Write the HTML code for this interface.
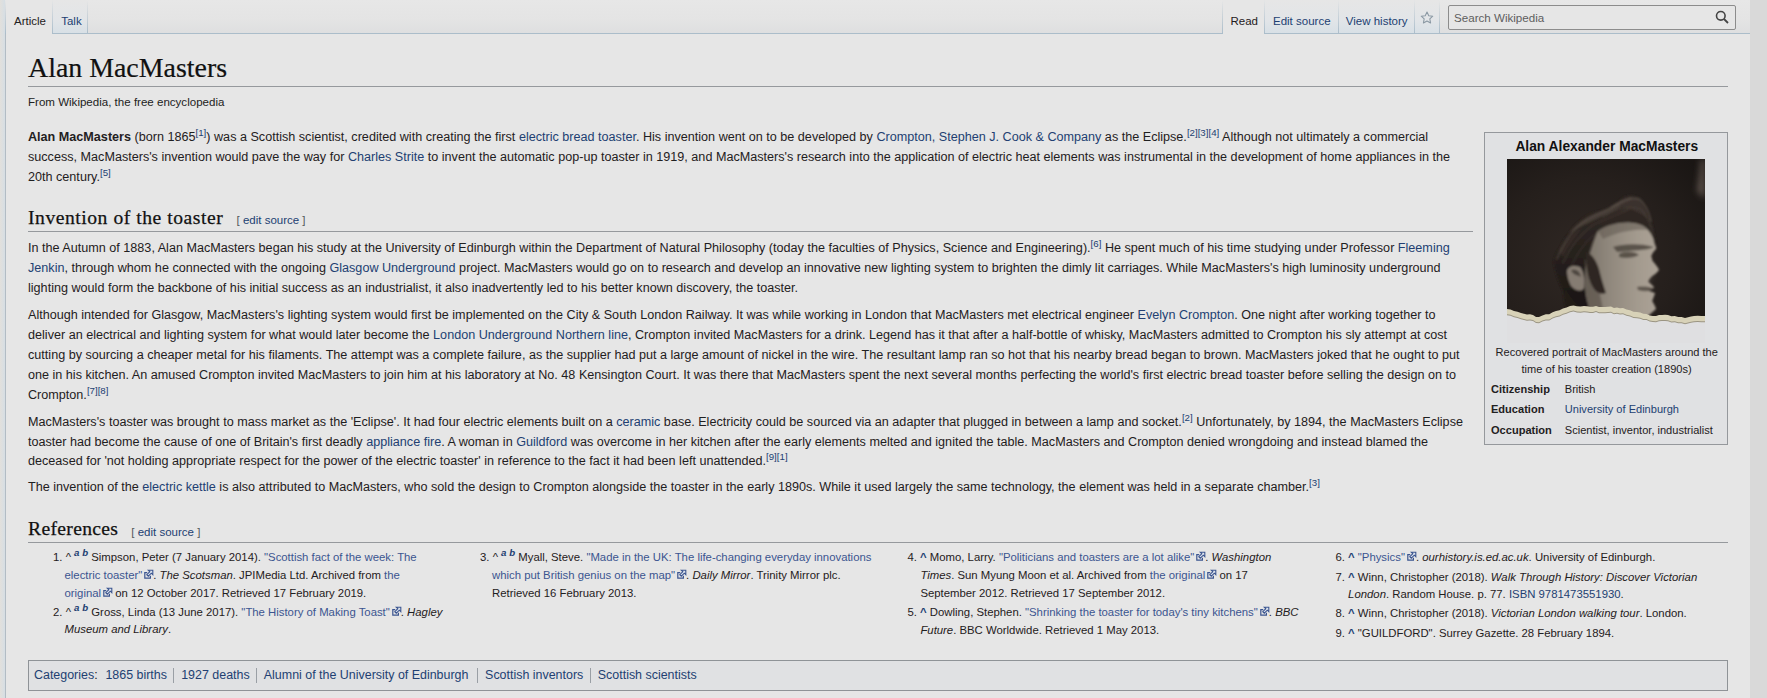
<!DOCTYPE html>
<html><head><meta charset="utf-8"><title>Alan MacMasters</title>
<style>
html,body{margin:0;padding:0}
body{width:1767px;height:698px;overflow:hidden;position:relative;background:#d9d9d9;font-family:"Liberation Sans",sans-serif;color:#1f2021}
.ln{position:absolute;white-space:nowrap}
a{color:#223f72;text-decoration:none}
a.x{color:#3b5590}
sup{position:relative;top:-5px;font-size:9.7px;vertical-align:baseline;line-height:0}
.ei{display:inline-block;vertical-align:baseline;margin-left:2px;margin-right:-1px;color:#3b5590}
#page{position:absolute;left:0;top:0;width:1750px;height:698px;background:#e6e6e6}
#lstrip{position:absolute;left:0;top:0;width:5px;height:698px;background:linear-gradient(to right,#e2e0dc,#d6dee4)}
#lborder{position:absolute;left:5px;top:33px;width:1px;height:665px;background:#b2bcc4}
.tabline{position:absolute;height:1px;background:#abbdca}
.tab{position:absolute;top:0;height:33px;background:linear-gradient(to bottom,#e6e6e6 0%,#e2e5e8 60%,#d8e0e6 100%)}
.tsep{position:absolute;top:0;width:1px;height:34px;background:linear-gradient(to bottom,rgba(171,189,202,0) 0%,#abbdca 100%)}
.hr{position:absolute;height:1px;background:#96999d}
#infobox{position:absolute;left:1484px;top:132px;width:242px;height:311px;border:1px solid #95989c;background:#e0e1e3}
.sep{display:inline-block;width:1px;height:14px;background:#9a9fa5;margin:0 7px;vertical-align:-3px}
#cats{position:absolute;left:28px;top:660px;width:1698px;height:29px;border:1px solid #8f9397;background:#e0e1e3}
</style></head><body>
<div id="page"></div>
<div id="lstrip"></div>
<div style="position:absolute;left:6px;top:0;width:1744px;height:33px;background:linear-gradient(to bottom,#e7e7e7 0%,#e4e4e4 60%,#dedfe0 100%)"></div>
<div style="position:absolute;left:6px;top:0;width:46px;height:34px;background:#e6e6e6"></div>
<div style="position:absolute;left:1223px;top:0;width:41px;height:34px;background:#e6e6e6"></div>
<div id="lborder"></div>

<div class="tabline" style="left:52px;top:33px;width:1171px"></div>
<div class="tabline" style="left:1264px;top:33px;width:486px"></div>
<div class="tab" style="left:52px;width:35px"></div>
<div class="tsep" style="left:52px"></div><div class="tsep" style="left:87px"></div>
<div class="tsep" style="left:5px"></div>
<div class="tab" style="left:1264px;width:74px"></div>
<div class="tab" style="left:1338px;width:76px"></div>
<div class="tab" style="left:1414px;width:25px"></div>
<div class="tsep" style="left:1222px"></div>
<div class="tsep" style="left:1264px"></div>
<div class="tsep" style="left:1338px"></div>
<div class="tsep" style="left:1414px"></div>
<div class="tsep" style="left:1439px"></div>
<div class="ln " style="left:14px;top:10.22px;font-size:11.5px;line-height:23.00px;">Article</div>
<div class="ln " style="left:61.2px;top:10.22px;font-size:11.5px;line-height:23.00px;"><a>Talk</a></div>
<div class="ln " style="left:1230.5px;top:10.22px;font-size:11.5px;line-height:23.00px;">Read</div>
<div class="ln " style="left:1273px;top:10.22px;font-size:11.5px;line-height:23.00px;"><a>Edit source</a></div>
<div class="ln " style="left:1345.8px;top:10.22px;font-size:11.5px;line-height:23.00px;"><a>View history</a></div>
<svg style="position:absolute;left:1420px;top:11px" width="14" height="13" viewBox="0 0 14 13"><path d="M7 1l1.76 3.7 4 .5-2.95 2.77.77 3.98L7 10l-3.58 1.95.77-3.98L1.24 5.2l4-.5z" fill="none" stroke="#8a98a3" stroke-width="1.05" stroke-linejoin="round"/></svg>
<div style="position:absolute;left:1448px;top:5px;width:286px;height:23px;border:1px solid #8c8c8c;border-radius:2px;background:#e6e6e6"></div>
<div class="ln " style="left:1454px;top:5.88px;font-size:11.6px;line-height:23.20px;color:#5e5e5e">Search Wikipedia</div>
<svg style="position:absolute;left:1715px;top:9.8px" width="14" height="14" viewBox="0 0 14 14"><circle cx="5.8" cy="5.8" r="4.3" fill="none" stroke="#444" stroke-width="1.6"/><path d="M9 9l4 4" stroke="#444" stroke-width="1.8"/></svg>
<div class="ln " style="left:28px;top:40.48px;font-size:27.9px;line-height:55.80px;font-family:'Liberation Serif',serif;color:#111;-webkit-text-stroke:0.2px #111">Alan MacMasters</div>
<div class="hr" style="left:28px;top:86px;width:1700px"></div>
<div class="ln " style="left:28px;top:90.85px;font-size:11.55px;line-height:23.10px;color:#222">From Wikipedia, the free encyclopedia</div>
<div class="ln " style="left:28px;top:124.71px;font-size:12.62px;line-height:25.24px;"><b>Alan MacMasters</b> (born 1865<sup><a>[1]</a></sup>) was a Scottish scientist, credited with creating the first <a>electric bread toaster</a>. His invention went on to be developed by <a>Crompton, Stephen J. Cook &amp; Company</a> as the Eclipse.<sup><a>[2]</a><a>[3]</a><a>[4]</a></sup> Although not ultimately a commercial</div>
<div class="ln " style="left:28px;top:144.71px;font-size:12.62px;line-height:25.24px;">success, MacMasters's invention would pave the way for <a>Charles Strite</a> to invent the automatic pop-up toaster in 1919, and MacMasters's research into the application of electric heat elements was instrumental in the development of home appliances in the</div>
<div class="ln " style="left:28px;top:164.71px;font-size:12.62px;line-height:25.24px;">20th century.<sup><a>[5]</a></sup></div>
<div class="ln " style="left:28px;top:197.69px;font-size:19.6px;line-height:39.20px;font-family:'Liberation Serif',serif;color:#111;letter-spacing:0.54px;-webkit-text-stroke:0.25px #111">Invention of the toaster</div>
<div class="ln " style="left:236.5px;top:209.32px;font-size:11.5px;line-height:23.00px;color:#54595d">[ <a>edit source</a> ]</div>
<div class="hr" style="left:28px;top:231px;width:1445px"></div>
<div class="ln " style="left:28px;top:236.01px;font-size:12.62px;line-height:25.24px;">In the Autumn of 1883, Alan MacMasters began his study at the University of Edinburgh within the Department of Natural Philosophy (today the faculties of Physics, Science and Engineering).<sup><a>[6]</a></sup> He spent much of his time studying under Professor <a>Fleeming</a></div>
<div class="ln " style="left:28px;top:256.01px;font-size:12.62px;line-height:25.24px;"><a>Jenkin</a>, through whom he connected with the ongoing <a>Glasgow Underground</a> project. MacMasters would go on to research and develop an innovative new lighting system to brighten the dimly lit carriages. While MacMasters's high luminosity underground</div>
<div class="ln " style="left:28px;top:276.01px;font-size:12.62px;line-height:25.24px;">lighting would form the backbone of his initial success as an industrialist, it also inadvertently led to his better known discovery, the toaster.</div>
<div class="ln " style="left:28px;top:303.01px;font-size:12.62px;line-height:25.24px;">Although intended for Glasgow, MacMasters's lighting system would first be implemented on the City &amp; South London Railway. It was while working in London that MacMasters met electrical engineer <a>Evelyn Crompton</a>. One night after working together to</div>
<div class="ln " style="left:28px;top:323.01px;font-size:12.62px;line-height:25.24px;">deliver an electrical and lighting system for what would later become the <a>London Underground Northern line</a>, Crompton invited MacMasters for a drink. Legend has it that after a half-bottle of whisky, MacMasters admitted to Crompton his sly attempt at cost</div>
<div class="ln " style="left:28px;top:343.01px;font-size:12.62px;line-height:25.24px;">cutting by sourcing a cheaper metal for his filaments. The attempt was a complete failure, as the supplier had put a large amount of nickel in the wire. The resultant lamp ran so hot that his nearby bread began to brown. MacMasters joked that he ought to put</div>
<div class="ln " style="left:28px;top:363.01px;font-size:12.62px;line-height:25.24px;">one in his kitchen. An amused Crompton invited MacMasters to join him at his laboratory at No. 48 Kensington Court. It was there that MacMasters spent the next several months perfecting the world's first electric bread toaster before selling the design on to</div>
<div class="ln " style="left:28px;top:383.01px;font-size:12.62px;line-height:25.24px;">Crompton.<sup><a>[7]</a><a>[8]</a></sup></div>
<div class="ln " style="left:28px;top:409.71px;font-size:12.62px;line-height:25.24px;">MacMasters's toaster was brought to mass market as the 'Eclipse'. It had four electric elements built on a <a>ceramic</a> base. Electricity could be sourced via an adapter that plugged in between a lamp and socket.<sup><a>[2]</a></sup> Unfortunately, by 1894, the MacMasters Eclipse</div>
<div class="ln " style="left:28px;top:429.51px;font-size:12.62px;line-height:25.24px;">toaster had become the cause of one of Britain's first deadly <a>appliance fire</a>. A woman in <a>Guildford</a> was overcome in her kitchen after the early elements melted and ignited the table. MacMasters and Crompton denied wrongdoing and instead blamed the</div>
<div class="ln " style="left:28px;top:449.31px;font-size:12.62px;line-height:25.24px;">deceased for 'not holding appropriate respect for the power of the electric toaster' in reference to the fact it had been left unattended.<sup><a>[9]</a><a>[1]</a></sup></div>
<div class="ln " style="left:28px;top:475.41px;font-size:12.62px;line-height:25.24px;">The invention of the <a>electric kettle</a> is also attributed to MacMasters, who sold the design to Crompton alongside the toaster in the early 1890s. While it used largely the same technology, the element was held in a separate chamber.<sup><a>[3]</a></sup></div>
<div class="ln " style="left:28px;top:508.58px;font-size:19.6px;line-height:39.20px;font-family:'Liberation Serif',serif;color:#111;letter-spacing:0.33px;-webkit-text-stroke:0.25px #111">References</div>
<div class="ln " style="left:131.3px;top:520.52px;font-size:11.5px;line-height:23.00px;color:#54595d">[ <a>edit source</a> ]</div>
<div class="hr" style="left:28px;top:542px;width:1700px"></div>
<div class="ln " style="left:53px;top:546.22px;font-size:11.35px;line-height:22.70px;color:#1f2021">1. <span class="ab">^ <sup class="s2"><i><b><a>a</a> <a>b</a></b></i></sup></span> Simpson, Peter (7 January 2014). <a class="x">"Scottish fact of the week: The</a></div>
<div class="ln " style="left:64.5px;top:563.92px;font-size:11.35px;line-height:22.70px;color:#1f2021"><a class="x">electric toaster"<svg class="ei" width="10" height="10" viewBox="0 0 10 10"><path d="M3.2 3.6H0.8V9.2H6.4V6.8" fill="none" stroke="currentColor" stroke-width="1.2"/><path d="M4.3 1.2H8.8V5.7L7.3 4.2L4.3 7.2L2.8 5.7L5.8 2.7Z" fill="#dfe6f0" stroke="currentColor" stroke-width="1.1" stroke-linejoin="miter"/></svg></a>. <i>The Scotsman</i>. JPIMedia Ltd. Archived from <a class="x">the</a></div>
<div class="ln " style="left:64.5px;top:582.02px;font-size:11.35px;line-height:22.70px;color:#1f2021"><a class="x">original<svg class="ei" width="10" height="10" viewBox="0 0 10 10"><path d="M3.2 3.6H0.8V9.2H6.4V6.8" fill="none" stroke="currentColor" stroke-width="1.2"/><path d="M4.3 1.2H8.8V5.7L7.3 4.2L4.3 7.2L2.8 5.7L5.8 2.7Z" fill="#dfe6f0" stroke="currentColor" stroke-width="1.1" stroke-linejoin="miter"/></svg></a> on 12 October 2017. Retrieved 17 February 2019.</div>
<div class="ln " style="left:53px;top:600.92px;font-size:11.35px;line-height:22.70px;color:#1f2021">2. <span class="ab">^ <sup class="s2"><i><b><a>a</a> <a>b</a></b></i></sup></span> Gross, Linda (13 June 2017). <a class="x">"The History of Making Toast"<svg class="ei" width="10" height="10" viewBox="0 0 10 10"><path d="M3.2 3.6H0.8V9.2H6.4V6.8" fill="none" stroke="currentColor" stroke-width="1.2"/><path d="M4.3 1.2H8.8V5.7L7.3 4.2L4.3 7.2L2.8 5.7L5.8 2.7Z" fill="#dfe6f0" stroke="currentColor" stroke-width="1.1" stroke-linejoin="miter"/></svg></a>. <i>Hagley</i></div>
<div class="ln " style="left:64.5px;top:618.32px;font-size:11.35px;line-height:22.70px;color:#1f2021"><i>Museum and Library</i>.</div>
<div class="ln " style="left:480px;top:546.22px;font-size:11.35px;line-height:22.70px;color:#1f2021">3. <span class="ab">^ <sup class="s2"><i><b><a>a</a> <a>b</a></b></i></sup></span> Myall, Steve. <a class="x">"Made in the UK: The life-changing everyday innovations</a></div>
<div class="ln " style="left:492px;top:564.02px;font-size:11.35px;line-height:22.70px;color:#1f2021"><a class="x">which put British genius on the map"<svg class="ei" width="10" height="10" viewBox="0 0 10 10"><path d="M3.2 3.6H0.8V9.2H6.4V6.8" fill="none" stroke="currentColor" stroke-width="1.2"/><path d="M4.3 1.2H8.8V5.7L7.3 4.2L4.3 7.2L2.8 5.7L5.8 2.7Z" fill="#dfe6f0" stroke="currentColor" stroke-width="1.1" stroke-linejoin="miter"/></svg></a>. <i>Daily Mirror</i>. Trinity Mirror plc.</div>
<div class="ln " style="left:492px;top:582.12px;font-size:11.35px;line-height:22.70px;color:#1f2021">Retrieved 16 February 2013.</div>
<div class="ln " style="left:907.4px;top:546.22px;font-size:11.35px;line-height:22.70px;color:#1f2021">4. <b><a>^</a></b> Momo, Larry. <a class="x">"Politicians and toasters are a lot alike"<svg class="ei" width="10" height="10" viewBox="0 0 10 10"><path d="M3.2 3.6H0.8V9.2H6.4V6.8" fill="none" stroke="currentColor" stroke-width="1.2"/><path d="M4.3 1.2H8.8V5.7L7.3 4.2L4.3 7.2L2.8 5.7L5.8 2.7Z" fill="#dfe6f0" stroke="currentColor" stroke-width="1.1" stroke-linejoin="miter"/></svg></a>. <i>Washington</i></div>
<div class="ln " style="left:920.4px;top:564.32px;font-size:11.35px;line-height:22.70px;color:#1f2021"><i>Times</i>. Sun Myung Moon et al. Archived from <a class="x">the original<svg class="ei" width="10" height="10" viewBox="0 0 10 10"><path d="M3.2 3.6H0.8V9.2H6.4V6.8" fill="none" stroke="currentColor" stroke-width="1.2"/><path d="M4.3 1.2H8.8V5.7L7.3 4.2L4.3 7.2L2.8 5.7L5.8 2.7Z" fill="#dfe6f0" stroke="currentColor" stroke-width="1.1" stroke-linejoin="miter"/></svg></a> on 17</div>
<div class="ln " style="left:920.4px;top:582.22px;font-size:11.35px;line-height:22.70px;color:#1f2021">September 2012. Retrieved 17 September 2012.</div>
<div class="ln " style="left:907.4px;top:601.12px;font-size:11.35px;line-height:22.70px;color:#1f2021">5. <b><a>^</a></b> Dowling, Stephen. <a class="x">"Shrinking the toaster for today's tiny kitchens"<svg class="ei" width="10" height="10" viewBox="0 0 10 10"><path d="M3.2 3.6H0.8V9.2H6.4V6.8" fill="none" stroke="currentColor" stroke-width="1.2"/><path d="M4.3 1.2H8.8V5.7L7.3 4.2L4.3 7.2L2.8 5.7L5.8 2.7Z" fill="#dfe6f0" stroke="currentColor" stroke-width="1.1" stroke-linejoin="miter"/></svg></a>. <i>BBC</i></div>
<div class="ln " style="left:920.4px;top:619.12px;font-size:11.35px;line-height:22.70px;color:#1f2021"><i>Future</i>. BBC Worldwide. Retrieved 1 May 2013.</div>
<div class="ln " style="left:1335.4px;top:546.22px;font-size:11.35px;line-height:22.70px;color:#1f2021">6. <b><a>^</a></b> <a class="x">"Physics"<svg class="ei" width="10" height="10" viewBox="0 0 10 10"><path d="M3.2 3.6H0.8V9.2H6.4V6.8" fill="none" stroke="currentColor" stroke-width="1.2"/><path d="M4.3 1.2H8.8V5.7L7.3 4.2L4.3 7.2L2.8 5.7L5.8 2.7Z" fill="#dfe6f0" stroke="currentColor" stroke-width="1.1" stroke-linejoin="miter"/></svg></a>. <i>ourhistory.is.ed.ac.uk</i>. University of Edinburgh.</div>
<div class="ln " style="left:1335.4px;top:565.52px;font-size:11.35px;line-height:22.70px;color:#1f2021">7. <b><a>^</a></b> Winn, Christopher (2018). <i>Walk Through History: Discover Victorian</i></div>
<div class="ln " style="left:1348.1px;top:583.42px;font-size:11.35px;line-height:22.70px;color:#1f2021"><i>London</i>. Random House. p. 77. <a>ISBN 9781473551930</a>.</div>
<div class="ln " style="left:1335.4px;top:602.32px;font-size:11.35px;line-height:22.70px;color:#1f2021">8. <b><a>^</a></b> Winn, Christopher (2018). <i>Victorian London walking tour</i>. London.</div>
<div class="ln " style="left:1335.4px;top:622.42px;font-size:11.35px;line-height:22.70px;color:#1f2021">9. <b><a>^</a></b> "GUILDFORD". Surrey Gazette. 28 February 1894.</div>
<div id="cats"></div>
<div class="ln " style="left:34px;top:663.04px;font-size:12.45px;line-height:24.90px;"><a>Categories</a>:</div>
<div class="ln " style="left:105.4px;top:663.04px;font-size:12.45px;line-height:24.90px;"><a>1865 births</a></div>
<div class="ln " style="left:181.2px;top:663.04px;font-size:12.45px;line-height:24.90px;"><a>1927 deaths</a></div>
<div class="ln " style="left:263.8px;top:663.04px;font-size:12.45px;line-height:24.90px;"><a>Alumni of the University of Edinburgh</a></div>
<div class="ln " style="left:485.1px;top:663.04px;font-size:12.45px;line-height:24.90px;"><a>Scottish inventors</a></div>
<div class="ln " style="left:597.8px;top:663.04px;font-size:12.45px;line-height:24.90px;"><a>Scottish scientists</a></div>
<div style="position:absolute;left:173px;top:668px;width:1px;height:15px;background:#9a9fa5"></div>
<div style="position:absolute;left:256px;top:668px;width:1px;height:15px;background:#9a9fa5"></div>
<div style="position:absolute;left:477px;top:668px;width:1px;height:15px;background:#9a9fa5"></div>
<div style="position:absolute;left:590px;top:668px;width:1px;height:15px;background:#9a9fa5"></div>
<div id="infobox"></div>
<div class="ln " style="left:1515.4px;top:133.42px;font-size:13.8px;line-height:27.60px;color:#111"><b>Alan Alexander MacMasters</b></div>
<div style="position:absolute;left:1507px;top:159px;width:198px;height:184px;overflow:hidden"><svg width="198" height="184" viewBox="0 0 198 184">
<defs>
<radialGradient id="bg" cx="0.4" cy="0.55" r="0.75"><stop offset="0" stop-color="#302824"/><stop offset="0.6" stop-color="#251f1c"/><stop offset="1" stop-color="#1a1614"/></radialGradient>
<linearGradient id="face" x1="0" y1="0" x2="1" y2="0"><stop offset="0" stop-color="#7a7268"/><stop offset="0.3" stop-color="#8e867b"/><stop offset="0.7" stop-color="#a39a8e"/><stop offset="1" stop-color="#aca397"/></linearGradient>
<linearGradient id="hair" x1="0" y1="0" x2="0" y2="1"><stop offset="0" stop-color="#332b27"/><stop offset="0.6" stop-color="#241e1b"/><stop offset="1" stop-color="#1a1513"/></linearGradient>
<filter id="b1" x="-10%" y="-10%" width="120%" height="120%"><feGaussianBlur stdDeviation="0.9"/></filter>
<filter id="b2" x="-30%" y="-30%" width="160%" height="160%"><feGaussianBlur stdDeviation="3"/></filter>
</defs>
<rect width="198" height="184" fill="url(#bg)"/>
<g filter="url(#b2)">
<path d="M194 0 L198 0 L198 40 L190 32 C192 20 193 10 194 0 Z" fill="#5a5048"/>


<ellipse cx="128" cy="112" rx="16" ry="20" fill="#c2b9ad" opacity="0.3"/>
</g>
<g filter="url(#b1)">
<path d="M46.5 103.4 C48 96 50 92 52.3 89.8 C56 82 58 78 62 74.4 C66 68 68 66 71.7 62.8 C76 59 79 57 83.3 55 C88 53 92 52 96.8 51.1 C102 49 106 46 110.4 43.4 C114 40 118 37 122 36.6 C126 36 130 37 133.6 39.5 C137 43 139 48 141.3 53.1 C144 60 146 67 147.1 74.4 C148 78 149 81 149 84 L146 86 C140 74 132 66 124 64 C112 62 100 66 91 72 C86 80 82 90 80 100 C78 112 78 126 80 140 L84 156 L70 156 C60 140 50 124 46.5 103.4 Z" fill="url(#hair)"/>
<path d="M62 74 C72 62 86 55 100 50 C110 45 118 39 126 38 C120 44 110 50 100 55 C88 60 76 66 62 74 Z" fill="#4d433c" opacity="0.8"/>
<path d="M112 46 C120 40 128 38 134 42 C138 48 140 54 141 60 C134 54 124 50 112 46 Z" fill="#3e352f" opacity="0.8"/>
<path d="M52 92 C58 82 66 74 76 68 C70 76 62 86 56 98 Z" fill="#3a312c" opacity="0.7"/>
<g fill="none" stroke-linecap="round" opacity="0.55">
<path d="M50 100 C56 84 66 70 80 60 C92 54 104 50 116 42" stroke="#5a5048" stroke-width="1.6"/>
<path d="M56 104 C62 90 72 76 86 66 C98 60 110 56 122 50" stroke="#4d443d" stroke-width="1.3"/>
<path d="M64 108 C70 94 78 82 92 72" stroke="#453c36" stroke-width="1.2"/>
<path d="M104 48 C114 42 124 38 132 40 C138 44 142 52 144 62" stroke="#6a5f56" stroke-width="1.4"/>
<path d="M96 58 C108 50 122 46 134 50 C140 56 144 66 146 76" stroke="#4f463f" stroke-width="1.2"/>
</g>
<path d="M91 72 C100 66 112 63 124 63.7 C132 64 138 67 141 71 C145 76 147 80 147 84 C149 87 149.5 89 149 90 C146 93 144.5 96 144.2 97.6 C145 99 145.2 100 145.2 101.4 C148 105 151 108 152 111 C150 114 147 116 145.2 117 C143 119 141.5 121 141.3 122.7 C144 125 146.5 127 147.1 128.5 C144 130 141 131 139.4 131.4 C143 132 146.5 133 148.1 134.3 C147 137 146 140 145.2 142.1 C147 145 148.5 148 149 150 L140 158 L86 158 C82 150 79 140 78 128 C77 118 78 108 81 100 C84 90 87 80 91 72 Z" fill="url(#face)"/>
<path d="M78 100 C86 104 90 120 96 150 L86 158 C80 146 77 128 78 100 Z" fill="#564e46" opacity="0.6"/>
<path d="M91 72 C100 66 112 63 124 63.7 C132 64 138 67 141 71 C130 70 112 72 96 80 Z" fill="#5c544c" opacity="0.5"/>
<path d="M106 88 C116 85 132 84 147 88 C140 92 126 91 110 93 Z" fill="#4e463f" opacity="0.85"/>
<path d="M112 95 C118 92 127 92 132 96 C127 99 118 100 112 98 Z" fill="#4a423b" opacity="0.8"/>
<path d="M130 128 C136 127 143 128 147 129 C144 133 137 133 131 131 Z" fill="#5a5149" opacity="0.9"/>
<path d="M79 92 C86 96 91 104 93 114 C95 122 97 128 99 134 C92 137 86 131 83 122 C80 114 79 104 79 92 Z" fill="#2e2723"/>
<path d="M60 112 C61 107 67 106 73 108 C77 112 78 122 77 129 C74 134 66 131 63 125 C61 120 60 116 60 112 Z" fill="#857c72"/>
<path d="M64 111 C69 109 73 112 74 118 C70 116 66 116 64 111 Z" fill="#4e463f"/>
<path d="M56 128 C62 136 70 146 80 156 L62 158 C58 148 56 138 56 128 Z" fill="#211b18"/>
</g>
<!-- torn edge -->
<path d="M0.0 150.0 L3.5 150.6 L7.0 152.1 L10.5 152.8 L14.0 154.0 L17.0 154.8 L20.0 155.5 L23.0 155.3 L26.0 155.9 L29.0 157.9 L32.0 158.0 L35.4 156.4 L38.8 155.2 L42.2 155.2 L45.6 153.2 L49.0 152.0 L52.5 151.3 L56.0 149.5 L59.5 148.5 L63.0 147.0 L66.5 146.4 L70.0 147.2 L73.5 147.6 L77.0 147.0 L80.0 147.2 L83.0 147.7 L86.0 147.7 L89.0 146.9 L92.0 148.1 L95.0 148.0 L98.0 148.0 L101.0 147.8 L104.0 147.6 L107.0 149.1 L110.0 148.6 L113.0 149.2 L116.0 149.0 L119.5 150.6 L123.0 151.3 L126.5 152.7 L130.0 153.0 L133.2 153.5 L136.3 154.8 L139.5 154.9 L142.7 156.4 L145.8 156.9 L149.0 157.0 L152.0 156.1 L155.0 155.9 L158.0 155.8 L161.0 156.0 L164.4 157.3 L167.8 157.1 L171.2 158.0 L174.6 158.1 L178.0 159.0 L181.0 158.3 L184.0 157.5 L187.0 157.0 L190.7 156.8 L194.3 157.1 L198.0 157.0 L198 184 L0 184 Z" fill="#d8d2b8"/>
<path d="M0.0 155.2 L3.5 155.8 L7.0 157.3 L10.5 158.0 L14.0 159.2 L17.0 160.0 L20.0 160.7 L23.0 160.5 L26.0 161.1 L29.0 163.1 L32.0 163.2 L35.4 161.6 L38.8 160.4 L42.2 160.4 L45.6 158.4 L49.0 157.2 L52.5 156.5 L56.0 154.7 L59.5 153.7 L63.0 152.2 L66.5 151.6 L70.0 152.4 L73.5 152.8 L77.0 152.2 L80.0 152.4 L83.0 152.9 L86.0 152.9 L89.0 152.1 L92.0 153.3 L95.0 153.2 L98.0 153.2 L101.0 153.0 L104.0 152.8 L107.0 154.3 L110.0 153.8 L113.0 154.4 L116.0 154.2 L119.5 155.8 L123.0 156.5 L126.5 157.9 L130.0 158.2 L133.2 158.7 L136.3 160.0 L139.5 160.1 L142.7 161.6 L145.8 162.1 L149.0 162.2 L152.0 161.3 L155.0 161.1 L158.0 161.0 L161.0 161.2 L164.4 162.5 L167.8 162.3 L171.2 163.2 L174.6 163.3 L178.0 164.2 L181.0 163.5 L184.0 162.7 L187.0 162.2 L190.7 162.0 L194.3 162.3 L198.0 162.2 L198 184 L0 184 Z" fill="#9a9482"/>
<path d="M0.0 156.2 L3.5 156.8 L7.0 158.3 L10.5 159.0 L14.0 160.2 L17.0 161.0 L20.0 161.7 L23.0 161.5 L26.0 162.1 L29.0 164.1 L32.0 164.2 L35.4 162.6 L38.8 161.4 L42.2 161.4 L45.6 159.4 L49.0 158.2 L52.5 157.5 L56.0 155.7 L59.5 154.7 L63.0 153.2 L66.5 152.6 L70.0 153.4 L73.5 153.8 L77.0 153.2 L80.0 153.4 L83.0 153.9 L86.0 153.9 L89.0 153.1 L92.0 154.3 L95.0 154.2 L98.0 154.2 L101.0 154.0 L104.0 153.8 L107.0 155.3 L110.0 154.8 L113.0 155.4 L116.0 155.2 L119.5 156.8 L123.0 157.5 L126.5 158.9 L130.0 159.2 L133.2 159.7 L136.3 161.0 L139.5 161.1 L142.7 162.6 L145.8 163.1 L149.0 163.2 L152.0 162.3 L155.0 162.1 L158.0 162.0 L161.0 162.2 L164.4 163.5 L167.8 163.3 L171.2 164.2 L174.6 164.3 L178.0 165.2 L181.0 164.5 L184.0 163.7 L187.0 163.2 L190.7 163.0 L194.3 163.3 L198.0 163.2 L198 184 L0 184 Z" fill="#dfdfe1"/>
</svg>
</div>
<div class="ln " style="left:1495.6px;top:340.92px;font-size:11.05px;line-height:22.10px;">Recovered portrait of MacMasters around the</div>
<div class="ln " style="left:1495.6px;top:357.62px;font-size:11.05px;line-height:22.10px;width:222px;text-align:center">time of his toaster creation (1890s)</div>
<div class="ln " style="left:1491px;top:377.82px;font-size:11.05px;line-height:22.10px;"><b>Citizenship</b></div>
<div class="ln " style="left:1564.8px;top:377.82px;font-size:11.05px;line-height:22.10px;">British</div>
<div class="ln " style="left:1491px;top:398.02px;font-size:11.05px;line-height:22.10px;"><b>Education</b></div>
<div class="ln " style="left:1564.8px;top:398.02px;font-size:11.05px;line-height:22.10px;"><a>University of Edinburgh</a></div>
<div class="ln " style="left:1491px;top:419.32px;font-size:11.05px;line-height:22.10px;"><b>Occupation</b></div>
<div class="ln " style="left:1564.8px;top:419.32px;font-size:11.05px;line-height:22.10px;">Scientist, inventor, industrialist</div>
</body></html>
